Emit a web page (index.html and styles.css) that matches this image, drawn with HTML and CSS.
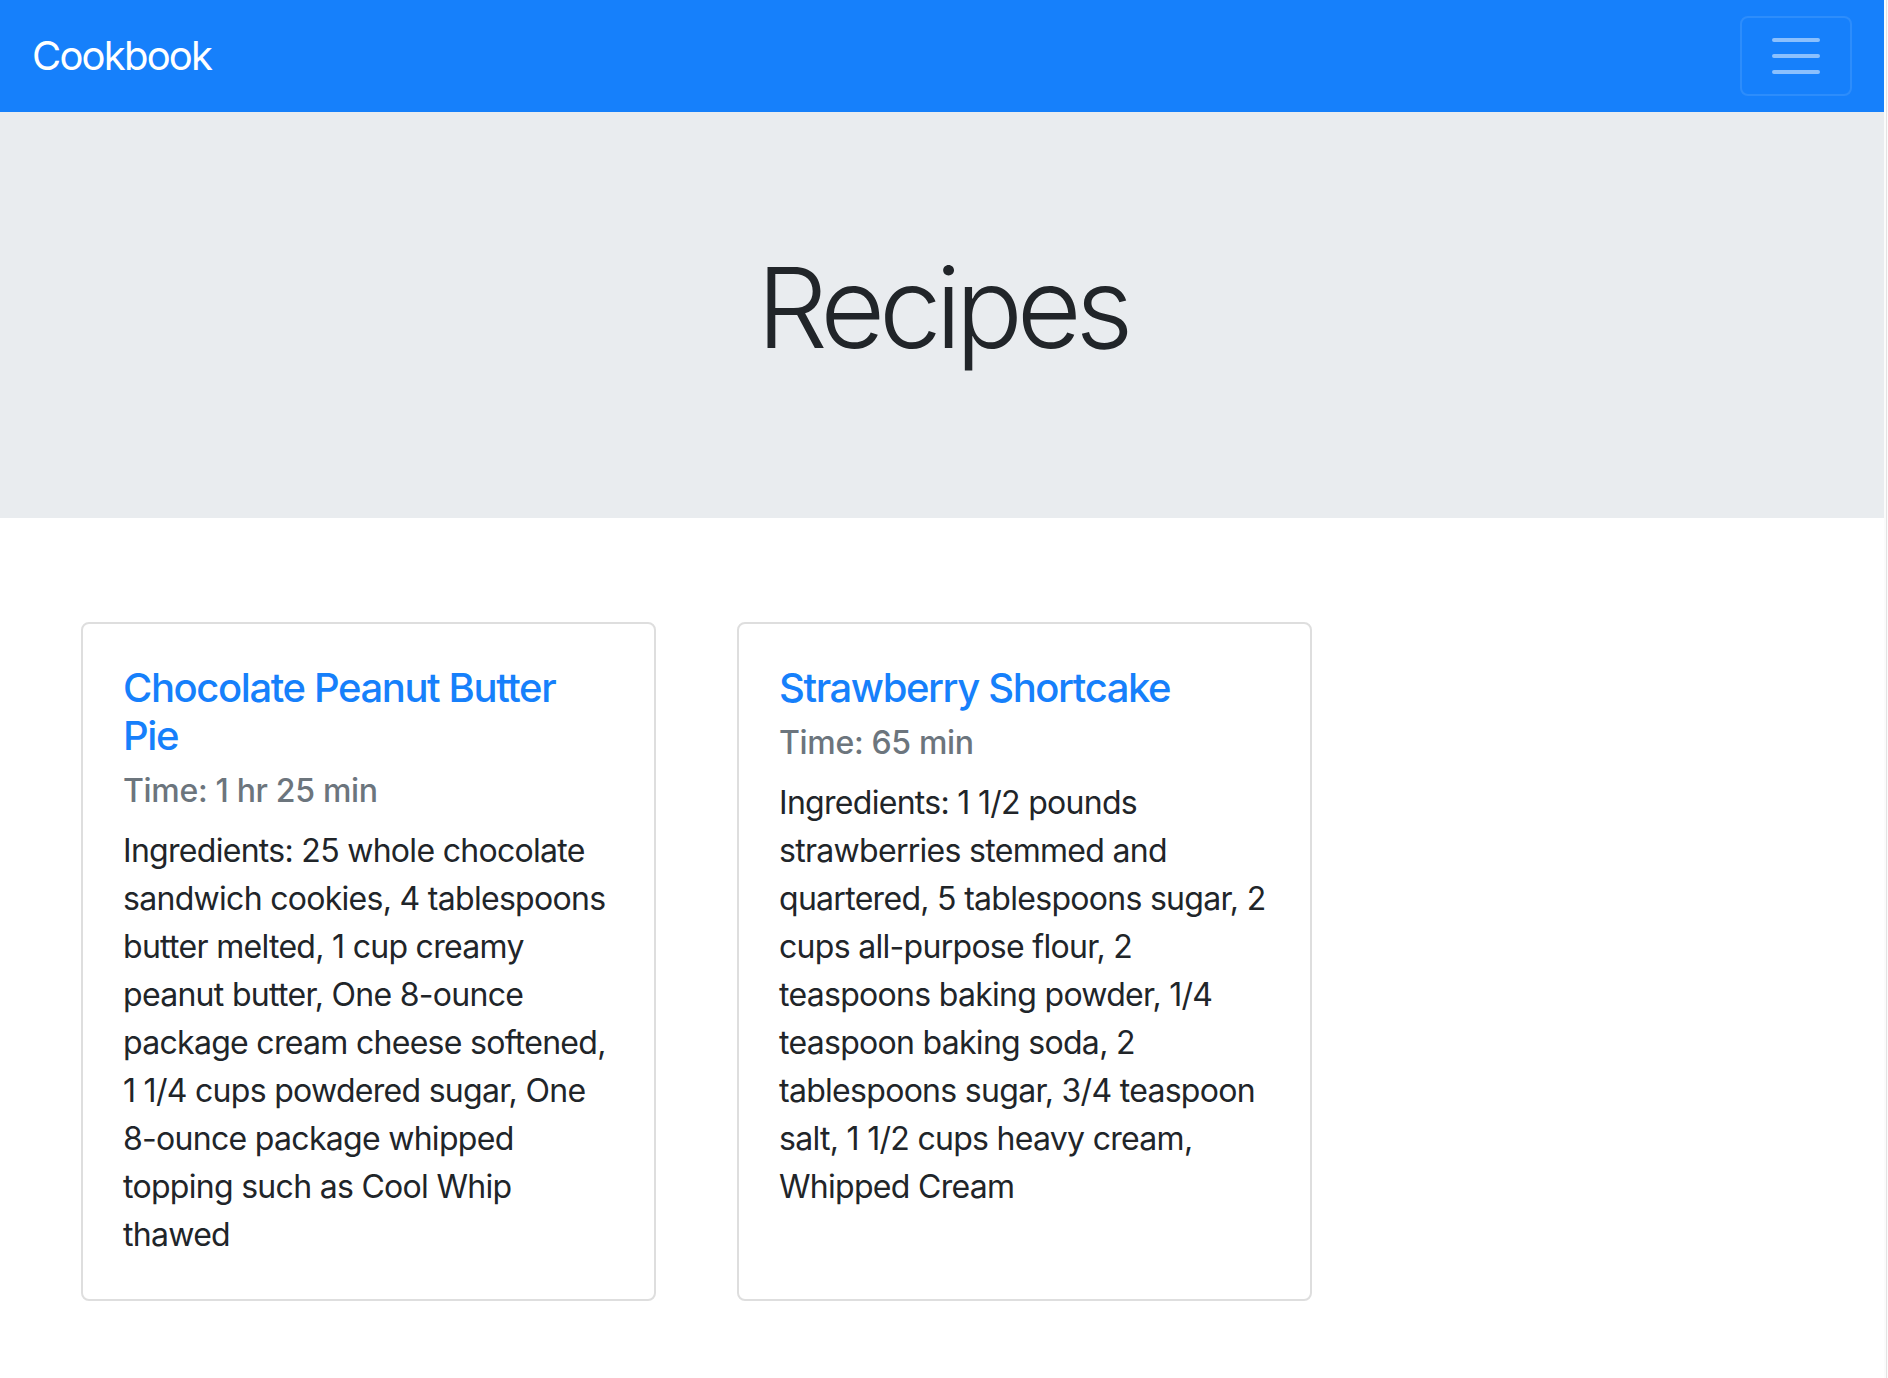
FILE: index.html
```html
<!DOCTYPE html>
<html lang="en">
<head>
<meta charset="utf-8">
<title>Cookbook</title>
<link rel="stylesheet" href="styles.css">
</head>
<body>
<div class="page">
  <nav class="navbar">
    <a class="brand" href="#">Cookbook</a>
    <button class="toggler" type="button" aria-label="Toggle navigation">
      <svg class="toggler-icon" viewBox="0 0 30 30" width="60" height="60">
        <path d="M4 7h22M4 15h22M4 23h22" stroke="rgba(255,255,255,0.5)" stroke-width="2" stroke-linecap="round" stroke-miterlimit="10" fill="none"/>
      </svg>
    </button>
  </nav>
  <header class="jumbotron">
    <h1 class="display">Recipes</h1>
  </header>
  <main class="recipes">
    <article class="card">
      <h5 class="card-title">Chocolate Peanut Butter<br>Pie</h5>
      <h6 class="card-subtitle">Time: 1 hr 25 min</h6>
      <p class="card-text">Ingredients: 25 whole chocolate<br>sandwich cookies, 4 tablespoons<br>butter melted, 1 cup creamy<br>peanut butter, One 8-ounce<br>package cream cheese softened,<br>1 1/4 cups powdered sugar, One<br>8-ounce package whipped<br>topping such as Cool Whip<br>thawed</p>
    </article>
    <article class="card">
      <h5 class="card-title">Strawberry Shortcake</h5>
      <h6 class="card-subtitle">Time: 65 min</h6>
      <p class="card-text">Ingredients: 1 1/2 pounds<br>strawberries stemmed and<br>quartered, 5 tablespoons sugar, 2<br>cups all-purpose flour, 2<br>teaspoons baking powder, 1/4<br>teaspoon baking soda, 2<br>tablespoons sugar, 3/4 teaspoon<br>salt, 1 1/2 cups heavy cream,<br>Whipped Cream</p>
    </article>
  </main>
</div>
<div class="scroll-strip"></div>
</body>
</html>
```
FILE: styles.css
```css
* { box-sizing: border-box; }

html, body {
  margin: 0;
  padding: 0;
  background: #fff;
}

body {
  display: flex;
  min-height: 1378px;
  font-family: "Inter", "Roboto", "Liberation Sans", sans-serif;
  color: #212529;
  font-size: 32px;
  line-height: 1.5;
}

.page {
  flex: 1;
  min-width: 0;
}

.scroll-strip {
  width: 4px;
  flex: none;
  background: linear-gradient(to right, #fbfbfb 0 2px, #e4e4e4 2px 3px, #fbfbfb 3px);
}

.navbar {
  display: flex;
  align-items: center;
  justify-content: space-between;
  height: 112px;
  padding: 16px 32px;
  background: #1680fb;
}

.brand {
  color: #fff;
  text-decoration: none;
  font-size: 40px;
  line-height: 60px;
  padding: 10px 0;
  font-weight: 400;
  letter-spacing: -0.045em;
}

.toggler {
  display: flex;
  align-items: center;
  justify-content: center;
  width: 112px;
  height: 80px;
  padding: 8px 24px;
  background: transparent;
  border: 2px solid rgba(255, 255, 255, 0.1);
  border-radius: 8px;
}

.toggler-icon {
  display: block;
  flex: none;
}

.jumbotron {
  background: #e9ecef;
  padding: 128px 64px;
  margin: 0 0 64px;
}

.display {
  margin: 0 0 16px;
  font-size: 112px;
  font-weight: 300;
  line-height: 1.2;
  text-align: center;
  color: #212529;
  letter-spacing: -0.055em;
}

.recipes {
  display: flex;
  align-items: stretch;
  gap: 81.5px;
  padding: 40px 0 0 81px;
}

.card {
  width: 574.5px;
  border: 2px solid #dedede;
  border-radius: 8px;
  padding: 40px;
  background: #fff;
}

.card-title {
  margin: 0 0 24px;
  font-size: 40px;
  font-weight: 500;
  line-height: 1.2;
  color: #1680fb;
  letter-spacing: -0.035em;
  white-space: nowrap;
}

.card-subtitle {
  margin: -12px 0 16px;
  font-size: 32px;
  font-weight: 500;
  line-height: 1.2;
  color: #6c757d;
  letter-spacing: -0.01em;
}

.card-text {
  margin: 0;
  font-size: 32px;
  line-height: 48px;
  letter-spacing: -0.022em;
  white-space: nowrap;
}
```
